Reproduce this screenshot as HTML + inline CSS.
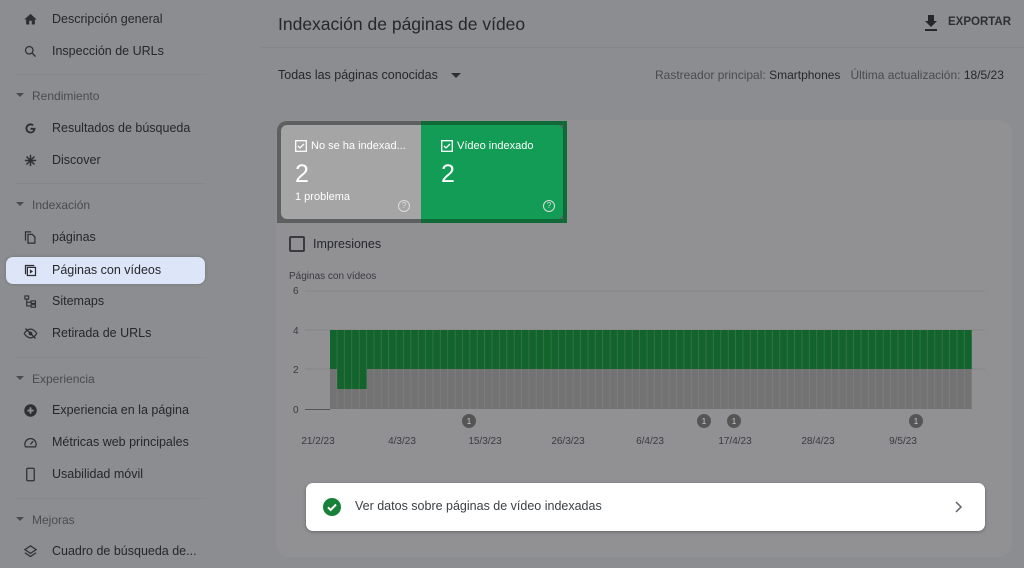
<!DOCTYPE html>
<html><head><meta charset="utf-8"><style>
*{margin:0;padding:0;box-sizing:border-box}
body{width:1024px;height:568px;overflow:hidden;background:#8c8d90;font-family:"Liberation Sans",sans-serif;color:#26272b;position:relative}
.it{position:absolute;left:0;height:26px;display:flex;align-items:center;font-size:12.5px;color:#26272b}
.it .ic{position:absolute;left:23px;top:6px;width:15px;height:15px}
.it span{position:absolute;left:52px;white-space:nowrap}
.sec{position:absolute;left:16px;font-size:12px;color:#4a4b50}
.sec:before{content:"";display:inline-block;border:4px solid transparent;border-top:4px solid #4a4b50;margin-right:8px;vertical-align:-1px}
.hr{position:absolute;left:16px;width:190px;height:1px;background:#86878a}
.sel{position:absolute;left:6px;top:257px;width:199px;height:27px;background:#dce6f8;border-radius:7px;box-shadow:0 0 3px rgba(0,0,0,.2)}
.t{position:absolute;white-space:nowrap}
</style></head><body>
<div class="sel"></div>
<div class="it" style="top:6px"><svg class="ic" viewBox="0 0 24 24"><path d="M10 20v-6h4v6h5v-8h3L12 3 2 12h3v8z" fill="#2e2f33"/></svg><span>Descripción general</span></div>
<div class="it" style="top:38px"><svg class="ic" viewBox="0 0 24 24"><circle cx="10" cy="10" r="6" fill="none" stroke="#2e2f33" stroke-width="2"/><path d="M14.5 14.5L20 20" stroke="#2e2f33" stroke-width="2.2"/></svg><span>Inspección de URLs</span></div>
<div class="hr" style="top:74px"></div>
<div class="sec" style="top:89px">Rendimiento</div>
<div class="it" style="top:115px"><svg class="ic" viewBox="0 0 24 24"><path d="M20 11h-8v3h4.6A5 5 0 1 1 15 8l2.2-2.2A8 8 0 1 0 20 12z" fill="#2e2f33"/></svg><span>Resultados de búsqueda</span></div>
<div class="it" style="top:147px"><svg class="ic" viewBox="0 0 24 24"><path d="M12 3v18M3 12h18M5.6 5.6l12.8 12.8M18.4 5.6L5.6 18.4" stroke="#2e2f33" stroke-width="2.4"/></svg><span>Discover</span></div>
<div class="hr" style="top:183px"></div>
<div class="sec" style="top:198px">Indexación</div>
<div class="it" style="top:224px"><svg class="ic" viewBox="0 0 24 24"><path d="M4 17V3h9M8 7h7l4 4v10H8z" fill="none" stroke="#2e2f33" stroke-width="2"/></svg><span>páginas</span></div>
<div class="it" style="top:257px"><svg class="ic" viewBox="0 0 24 24"><path d="M4 18V4h14" fill="none" stroke="#2e2f33" stroke-width="2"/><rect x="7" y="7" width="13" height="13" fill="none" stroke="#2e2f33" stroke-width="2"/><path d="M11 10v7l5-3.5z" fill="#2e2f33"/></svg><span>Páginas con vídeos</span></div>
<div class="it" style="top:288px"><svg class="ic" viewBox="0 0 24 24"><path d="M3 3h6v5H3zM13 11h7v4h-7zM13 17h7v4h-7zM6 8v11h7M6 13h7" fill="none" stroke="#2e2f33" stroke-width="1.8"/></svg><span>Sitemaps</span></div>
<div class="it" style="top:320px"><svg class="ic" viewBox="0 0 24 24"><path d="M2 12s4-7 10-7 10 7 10 7-4 7-10 7S2 12 2 12z" fill="none" stroke="#2e2f33" stroke-width="2"/><circle cx="12" cy="12" r="3" fill="#2e2f33"/><path d="M4 4l16 16" stroke="#2e2f33" stroke-width="2"/></svg><span>Retirada de URLs</span></div>
<div class="hr" style="top:357px"></div>
<div class="sec" style="top:372px">Experiencia</div>
<div class="it" style="top:397px"><svg class="ic" viewBox="0 0 24 24"><circle cx="12" cy="12" r="10" fill="#2e2f33"/><path d="M12 7v10M7 12h10" stroke="#8c8d90" stroke-width="3"/></svg><span>Experiencia en la página</span></div>
<div class="it" style="top:429px"><svg class="ic" viewBox="0 0 24 24"><path d="M4 19a9 9 0 1 1 16 0z" fill="none" stroke="#2e2f33" stroke-width="2"/><path d="M12 15l4-5" stroke="#2e2f33" stroke-width="2"/></svg><span>Métricas web principales</span></div>
<div class="it" style="top:461px"><svg class="ic" viewBox="0 0 24 24"><rect x="6" y="2" width="12" height="20" rx="2" fill="none" stroke="#2e2f33" stroke-width="2"/></svg><span>Usabilidad móvil</span></div>
<div class="hr" style="top:498px"></div>
<div class="sec" style="top:513px">Mejoras</div>
<div class="it" style="top:538px"><svg class="ic" viewBox="0 0 24 24"><path d="M12 3l9 6-9 6-9-6zM3 14l9 6 9-6" fill="none" stroke="#2e2f33" stroke-width="2"/></svg><span>Cuadro de búsqueda de...</span></div>

<div class="t" style="left:278px;top:14px;font-size:17.5px;color:#26272b">Indexación de páginas de vídeo</div>
<svg class="t" style="left:923px;top:14px" width="16" height="18" viewBox="0 0 16 18"><path d="M5 1h6v6h3l-6 6-6-6h3z" fill="#26272b"/><rect x="2" y="15" width="12" height="2" fill="#26272b"/></svg>
<div class="t" style="left:948px;top:16px;font-size:11.5px;font-weight:bold;color:#2e2f33">EXPORTAR</div>
<div style="position:absolute;left:260px;top:47px;width:764px;height:1px;background:#86878a"></div>
<div class="t" style="left:278px;top:68px;font-size:12.5px;color:#26272b">Todas las páginas conocidas</div>
<div class="t" style="left:451px;top:73px;border:5px solid transparent;border-top:5px solid #2e2f33"></div>
<div class="t" style="left:655px;top:68px;font-size:12px;color:#4a4b50">Rastreador principal: <span style="color:#26272b">Smartphones</span> &nbsp;&nbsp;Última actualización: <span style="color:#26272b">18/5/23</span></div>

<div style="position:absolute;left:276px;top:120px;width:736px;height:437px;background:#919194;border-radius:14px"></div>
<div style="position:absolute;left:277px;top:121px;width:290px;height:102px;background:#5e5f61;border-radius:10px 0 0 0"></div>
<div style="position:absolute;left:281px;top:125px;width:141px;height:94px;background:#a5a5a6;border-radius:6px 0 0 6px"></div>
<div style="position:absolute;left:421px;top:125px;width:142px;height:94px;background:#129c55;border-radius:0 6px 6px 0"></div>
<div style="position:absolute;left:563px;top:121px;width:4px;height:102px;background:#0f6a37"></div>
<div style="position:absolute;left:421px;top:121px;width:146px;height:4px;background:#0f6a37"></div>
<div style="position:absolute;left:421px;top:219px;width:146px;height:4px;background:#0f6a37"></div>
<svg class="t" style="left:295px;top:140px" width="12" height="12"><rect x=".7" y=".7" width="10.6" height="10.6" fill="none" stroke="#fff" stroke-width="1.3"/><path d="M3 6l2 2 4-4" fill="none" stroke="#fff" stroke-width="1.3"/></svg>
<div class="t" style="left:311px;top:140px;font-size:11px;color:#fff">No se ha indexad...</div>
<div class="t" style="left:295px;top:160px;font-size:25px;color:#fff">2</div>
<div class="t" style="left:295px;top:191px;font-size:11px;color:#fff">1 problema</div>
<div class="t" style="left:398px;top:200px;width:12px;height:12px;border:1.3px solid #ddd;border-radius:50%;font-size:8px;color:#ddd;text-align:center;line-height:10px">?</div>
<svg class="t" style="left:441px;top:140px" width="12" height="12"><rect x=".7" y=".7" width="10.6" height="10.6" fill="none" stroke="#fff" stroke-width="1.3"/><path d="M3 6l2 2 4-4" fill="none" stroke="#fff" stroke-width="1.3"/></svg>
<div class="t" style="left:457px;top:140px;font-size:11px;color:#fff">Vídeo indexado</div>
<div class="t" style="left:441px;top:160px;font-size:25px;color:#fff">2</div>
<div class="t" style="left:543px;top:200px;width:12px;height:12px;border:1.3px solid #ddd;border-radius:50%;font-size:8px;color:#ddd;text-align:center;line-height:10px">?</div>

<div class="t" style="left:289px;top:236px;width:16px;height:16px;border:2px solid #3a3b3f;border-radius:2px"></div>
<div class="t" style="left:313px;top:237px;font-size:12.5px;color:#26272b">Impresiones</div>
<div class="t" style="left:289px;top:271px;font-size:10px;color:#3a3b3f">Páginas con vídeos</div>

<svg class="t" style="left:280px;top:280px" width="720" height="170" viewBox="280 280 720 170">
<defs><pattern id="p" x="330" y="0" width="7.38" height="10" patternUnits="userSpaceOnUse"><rect x="6.7" width=".7" height="10" fill="#9a9a9a" opacity=".35"/></pattern></defs>
<g font-family="Liberation Sans" font-size="10" fill="#3a3b3f">
<text x="293" y="294">6</text><text x="293" y="334">4</text><text x="293" y="373">2</text><text x="293" y="413">0</text></g>
<path d="M305 291H985M305 330H985M305 369H985" stroke="#858588" stroke-width="1"/>
<path d="M305 409.5H330" stroke="#555" stroke-width="1"/>
<rect x="330" y="330" width="642" height="39" fill="#13632c"/>
<rect x="330" y="369" width="642" height="40" fill="#737373"/>
<rect x="337" y="369" width="30" height="20" fill="#13632c"/>
<rect x="330" y="330" width="642" height="79" fill="url(#p)"/>
<g fill="#555"><circle cx="469" cy="421" r="7"/><circle cx="704" cy="421" r="7"/><circle cx="734" cy="421" r="7"/><circle cx="916" cy="421" r="7"/></g>
<g font-family="Liberation Sans" font-size="8" fill="#ccc" text-anchor="middle"><text x="469" y="424">1</text><text x="704" y="424">1</text><text x="734" y="424">1</text><text x="916" y="424">1</text></g>
<g font-family="Liberation Sans" font-size="10" fill="#3a3b3f" text-anchor="middle">
<text x="318" y="444">21/2/23</text><text x="402" y="444">4/3/23</text><text x="485" y="444">15/3/23</text><text x="568" y="444">26/3/23</text><text x="650" y="444">6/4/23</text><text x="735" y="444">17/4/23</text><text x="818" y="444">28/4/23</text><text x="903" y="444">9/5/23</text></g>
</svg>

<div style="position:absolute;left:306px;top:483px;width:679px;height:48px;background:#fff;border-radius:7px;box-shadow:0 1px 3px rgba(0,0,0,.3)"></div>
<svg class="t" style="left:323px;top:498px" width="18" height="18" viewBox="0 0 18 18"><circle cx="9" cy="9" r="9" fill="#188038"/><path d="M5 9.3l2.7 2.7L13 6.5" fill="none" stroke="#fff" stroke-width="2"/></svg>
<div class="t" style="left:355px;top:499px;font-size:12.5px;color:#3c4043">Ver datos sobre páginas de vídeo indexadas</div>
<svg class="t" style="left:953px;top:500px" width="10" height="14"><path d="M3 2l5 5-5 5" fill="none" stroke="#5f6368" stroke-width="1.5"/></svg>
</body></html>
